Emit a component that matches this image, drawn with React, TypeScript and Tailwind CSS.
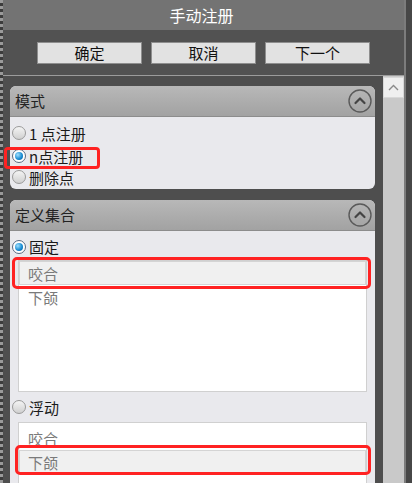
const font = { fontFamily: '"Noto Sans CJK SC", "Noto Sans", sans-serif' }

function Radio({ checked }: { checked?: boolean }) {
  return (
    <span
      className={`flex size-[14px] shrink-0 items-center justify-center rounded-full border ${
        checked ? "border-[#5a6a80] bg-white" : "border-[#9a9a9a] bg-gradient-to-b from-[#f4f4f4] to-[#d0d0d0]"
      }`}
    >
      {checked && (
        <span className="size-[8px] rounded-full bg-[radial-gradient(circle_at_35%_35%,#9fe0ff,#1488d0_60%,#0a5a96)]" />
      )}
    </span>
  )
}

function Collapse() {
  return (
    <svg width="24" height="24" viewBox="0 0 24 24" className="shrink-0">
      <circle cx="12" cy="12" r="11" fill="none" stroke="#5a5a5a" strokeWidth="1.4" />
      <path d="M7.5 14 L12 9.5 L16.5 14" fill="none" stroke="#444" strokeWidth="2.2" strokeLinecap="round" strokeLinejoin="round" />
    </svg>
  )
}

function PanelHeader({ title }: { title: string }) {
  return (
    <div className="flex h-[31px] items-center justify-between rounded-t-[6px] border-b border-[#8c8c8c] bg-gradient-to-b from-[#b8b8b8] to-[#a2a2a2] pl-[5px] pr-[3px] text-[15px] text-[#222]">
      <span>{title}</span>
      <Collapse />
    </div>
  )
}

function RadioRow({ label, checked, className = "" }: { label: string; checked?: boolean; className?: string }) {
  return (
    <div className={`flex items-center gap-[3px] pl-[2px] text-[15px] leading-none text-[#1a1a1a] ${className}`}>
      <Radio checked={checked} />
      <span>{label}</span>
    </div>
  )
}

function ListItem({ label, selected }: { label: string; selected?: boolean }) {
  return (
    <div
      className={`flex h-[24px] items-center pl-[8px] text-[15px] leading-none text-[#7a7a7a] ${
        selected ? "border border-[#d4d4d4] bg-[#f0f0f0]" : "border border-transparent"
      }`}
    >
      {label}
    </div>
  )
}

export default function App() {
  return (
    <div className="flex h-[483px] w-[412px] overflow-hidden bg-[#4e4e4e]" style={font}>
      <div className="w-[3px] shrink-0 border-l-[3px] border-dotted border-[#9a9a9a] bg-[#3c3c3c]" />

      <div className="flex w-[401px] shrink-0 flex-col">
        {/* Title */}
        <div className="flex h-[30px] items-center justify-center bg-[#737373] pr-[4px] text-[16px] text-white">
          手动注册
        </div>

        {/* Buttons */}
        <div className="flex h-[46px] items-center gap-[9px] border-b border-[#9c9c9c] bg-[#525252] pl-[34px]">
          {["确定", "取消", "下一个"].map((b) => (
            <button
              key={b}
              className="flex h-[22px] w-[105px] items-center justify-center border border-[#8e8e8e] bg-[#e2e2e2] text-[15px] leading-none text-[#111]"
            >
              {b}
            </button>
          ))}
        </div>

        {/* Content + scrollbar */}
        <div className="flex min-h-0 flex-1">
          <div className="flex w-[380px] flex-col gap-[11px] pl-[7px] pr-[8px] pt-[10px]">
            {/* 模式 */}
            <div className="rounded-[6px] bg-[#e9e9ed]">
              <PanelHeader title="模式" />
              <div className="relative flex h-[72px] flex-col pt-[5px]">
                <RadioRow label="1 点注册" className="h-[22px]" />
                <RadioRow label="n点注册" checked className="h-[24px]" />
                <RadioRow label="删除点" className="h-[18px]" />
                <div className="absolute left-[-6px] top-[30px] h-[22px] w-[96px] rounded-[4px] border-[3px] border-[#ff2222]" />
              </div>
            </div>

            {/* 定义集合 */}
            <div className="rounded-t-[6px] bg-[#e9e9ed]">
              <PanelHeader title="定义集合" />
              <div className="relative flex flex-col pb-[20px]">
                <RadioRow label="固定" checked className="h-[28px] pt-[3px]" />
                <div className="ml-[8px] mr-[8px] mt-[1px] h-[132px] border border-[#d0d0d0] bg-white">
                  <ListItem label="咬合" selected />
                  <ListItem label="下颌" />
                </div>
                <RadioRow label="浮动" className="h-[30px]" />
                <div className="ml-[8px] mr-[8px] h-[80px] border border-[#d0d0d0] bg-white pt-[3px]">
                  <ListItem label="咬合" />
                  <ListItem label="下颌" selected />
                </div>
                <div className="absolute left-[2px] top-[26px] h-[32px] w-[359px] rounded-[5px] border-[3px] border-[#ff2222]" />
                <div className="absolute left-[5px] top-[214px] h-[30px] w-[356px] rounded-[5px] border-[3px] border-[#ff2222]" />
              </div>
            </div>
          </div>

          {/* Scrollbar */}
          <div className="flex w-[21px] flex-col bg-[#c9c9c9] pt-[1px]">
            <div className="flex h-[21px] items-center justify-center border border-[#d8d8d8] bg-[#efefef]">
              <svg width="11" height="7" viewBox="0 0 11 7">
                <path d="M1 6 L5.5 1.5 L10 6" fill="none" stroke="#8a8a8a" strokeWidth="1.4" />
              </svg>
            </div>
          </div>
        </div>
      </div>

      <div className="w-[2px] shrink-0 bg-[#7c7c7c]" />
      <div className="flex-1 bg-[#474747]" />
    </div>
  )
}
